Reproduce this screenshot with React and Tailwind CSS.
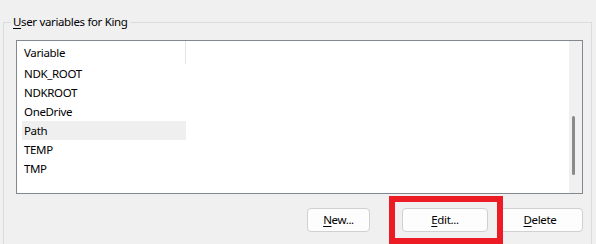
import React from "react";

const rows = ["NDK_ROOT", "NDKROOT", "OneDrive", "Path", "TEMP", "TMP"];

const Btn = ({ w, letter, rest }) => (
  <button
    type="button"
    className={`${w} h-[24px] rounded-[4px] border border-[#d0d0d0] bg-[#fdfdfd] text-black leading-none flex items-center justify-center`}
  >
    <span>
      <span className="underline underline-offset-2">{letter}</span>
      {rest}
    </span>
  </button>
);

export default function App() {
  return (
    <div className="relative w-[596px] h-[244px] overflow-hidden bg-[#f0f0f0] text-[11.5px] tracking-[-0.35px] text-black font-['Segoe_UI','Noto_Sans',sans-serif]">
      <fieldset className="ml-[3px] mt-[14px] w-[589px] h-[260px] border border-[#dcdcdc]">
        <legend className="ml-[7px] px-[2px] leading-[16px]">
          <span className="underline underline-offset-2">U</span>ser variables for King
        </legend>

        {/* list view */}
        <div className="ml-[12px] mt-[10px] w-[567px] h-[154px] border border-[#828790] bg-white flex">
          <div className="flex-1 min-w-0">
            {/* header */}
            <div className="h-[23px] flex">
              <div className="w-[169px] h-full pl-[7px] flex items-center border-r border-[#e5e5e5]">
                Variable
              </div>
            </div>
            {/* rows */}
            <div className="pl-[5px]">
              {rows.map((r) => (
                <div
                  key={r}
                  className={`w-[164px] h-[19px] pl-[2px] flex items-center ${r === "Path" ? "bg-[#efefef]" : ""}`}
                >
                  {r}
                </div>
              ))}
            </div>
          </div>
          {/* scrollbar */}
          <div className="w-[13px] h-full bg-[#f0f0f0] pt-[75px] pl-[3px]">
            <div className="w-[3px] h-[59px] rounded-full bg-[#8a8a8a]" />
          </div>
        </div>

        {/* buttons */}
        <div className="mt-[14px] w-[579px] flex justify-end">
          <Btn w="w-[63px]" letter="N" rest="ew..." />
          <div className="w-[32px]" />
          <Btn w="w-[86px]" letter="E" rest="dit..." />
          <div className="w-[9px]" />
          <Btn w="w-[86px]" letter="D" rest="elete" />
        </div>
      </fieldset>

      {/* red highlight annotation */}
      <div className="absolute left-[389px] top-[196px] w-[114px] h-[48px] border-[6px] border-[#ed1c24]" />
    </div>
  );
}
